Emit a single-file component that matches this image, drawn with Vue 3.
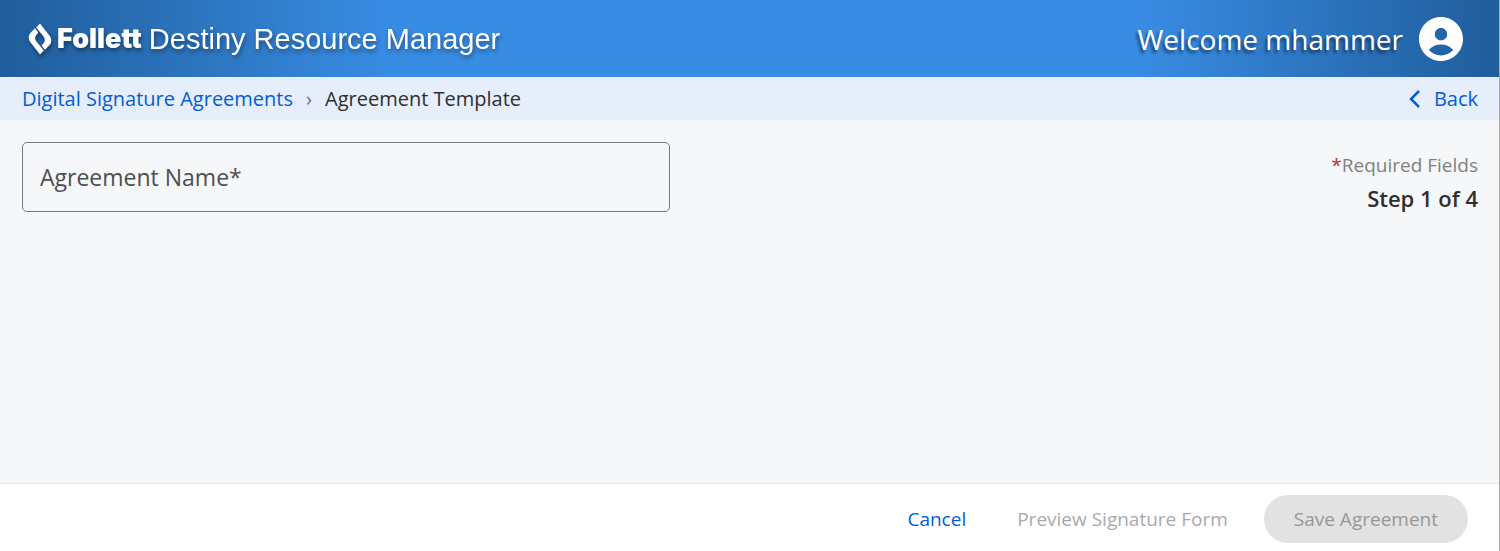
<script setup>
    import { ref } from 'vue';

    const userName = 'mhammer';
    const agreementName = ref('');
    const step = 1;
    const totalSteps = 4;
</script>


<template>
    <div class="page">
        <header class="topbar">
            <div class="brand">
                <svg class="logo" viewBox="0 0 24 32" aria-hidden="true">
                    <path d="M7 5.2 L2.4 10 Q-1 14 2.2 19 L12 31.4 L15.8 27.6 L8.6 18.8 Q6 15 8.2 12 L10.4 9.6 Z" />
                    <path d="M17 26.8 L21.6 22 Q25 18 21.8 13 L12 .6 L8.2 4.4 L15.4 13.2 Q18 17 15.8 20 L13.6 22.4 Z" />
                </svg>
                <span class="company">Follett</span>
                <span class="product">Destiny Resource Manager</span>
            </div>
            <div class="user">
                <span>Welcome {{ userName }}</span>
                <svg class="avatar" viewBox="2 2 20 20" aria-hidden="true">
                    <path d="M12 2C6.48 2 2 6.48 2 12s4.48 10 10 10 10-4.48 10-10S17.52 2 12 2zm0 5c1.55 0 2.8 1.25 2.8 2.8s-1.25 2.8-2.8 2.8-2.8-1.25-2.8-2.8S10.45 7 12 7zm0 12.5c-2.05 0-4.15-.83-5.55-2.45C7.95 15.3 9.9 14.5 12 14.5s4.05.8 5.55 2.55C16.15 18.67 14.05 19.5 12 19.5z" />
                </svg>
            </div>
        </header>

        <nav class="crumbs">
            <a href="#">Digital Signature Agreements</a>
            <span class="sep">›</span>
            <span>Agreement Template</span>
            <a href="#" class="back">
                <svg viewBox="0 0 12 20" aria-hidden="true"><path d="M11 2 L3 10 L11 18" /></svg>
                Back
            </a>
        </nav>

        <main class="content">
            <div class="field">
                <input id="agreement-name" v-model="agreementName" type="text" required />
                <label v-show="!agreementName" for="agreement-name">Agreement Name*</label>
            </div>
            <div class="info">
                <div class="required"><span class="star">*</span>Required Fields</div>
                <div class="step">Step {{ step }} of {{ totalSteps }}</div>
            </div>
        </main>

        <footer class="actions">
            <button type="button" class="cancel">Cancel</button>
            <button type="button" disabled>Preview Signature Form</button>
            <button type="button" class="save" disabled>Save Agreement</button>
        </footer>
    </div>
</template>


<style>
    body{
        margin: 0;
    }
</style>

<style scoped>
    .page{
        display: flex;
        flex-direction: column;
        min-height: 100vh;
        box-sizing: border-box;
        border-right: 1px solid #a9a9a9;
        background: #f6f7f9;
        color: #2e2f31;
        font-family: "Open Sans", "Noto Sans", sans-serif;
        font-size: 20px;
        line-height: 28px;
    }
    a{
        color: #005dd6;
        text-decoration: none;
    }
    .topbar{
        display: flex;
        align-items: center;
        justify-content: space-between;
        height: 77px;
        padding: 0 36px 0 28px;
        background: linear-gradient(90deg, #205d9b 0%, #388ce3 26%, #388ce3 76%, #205d9b 100%);
        color: #fff;
    }
    .brand{
        display: flex;
        align-items: center;
        font-family: "Liberation Sans", Arial, sans-serif;
        font-size: 29px;
        line-height: 32px;
        filter: drop-shadow(1px 3px 2px rgba(0, 0, 0, 0.4));
    }
    .logo{
        width: 24px;
        height: 32px;
        margin-right: 5px;
        fill: #fff;
    }
    .company{
        margin-right: 7px;
        font-family: Inter, "Open Sans", sans-serif;
        font-size: 27px;
        font-weight: 900;
    }
    .user{
        display: flex;
        align-items: center;
        gap: 16px;
        font-size: 28px;
        text-shadow: -2px 3px 3px rgba(0, 0, 0, 0.5);
    }
    .avatar{
        width: 44px;
        height: 44px;
        fill: #fff;
    }
    .crumbs{
        display: flex;
        align-items: center;
        height: 43px;
        padding: 0 21px 0 22px;
        background: #e7eefb;
    }
    .sep{
        margin: 0 13px;
        color: #6d6e73;
    }
    .back{
        display: flex;
        align-items: center;
        gap: 14px;
        margin-left: auto;
    }
    .back svg{
        width: 12px;
        height: 20px;
        fill: none;
        stroke: #005dd6;
        stroke-width: 2.5;
    }
    .content{
        display: flex;
        flex: 1;
        align-items: flex-start;
        justify-content: space-between;
        padding: 22px 21px 22px 22px;
    }
    /* 输入框和标签叠放在同一个网格单元里 */
    .field{
        display: grid;
        align-items: center;
        width: 45%;
        min-width: 320px;
        max-width: 648px;
        font-size: 23px;
    }
    .field input{
        grid-area: 1 / 1;
        width: 100%;
        height: 70px;
        padding: 0 18px;
        box-sizing: border-box;
        border: 1px solid #767982;
        border-radius: 5px;
        background: transparent;
        color: inherit;
        font: inherit;
    }
    .field label{
        grid-area: 1 / 1;
        padding-left: 18px;
        color: #4d4e52;
        pointer-events: none;
    }
    .info{
        padding-top: 9px;
        text-align: right;
    }
    .required{
        color: #7f7f83;
        font-size: 19px;
    }
    .star{
        color: #b5302f;
    }
    .step{
        margin-top: 5px;
        font-size: 22px;
        font-weight: 600;
    }
    .actions{
        display: flex;
        align-items: center;
        justify-content: flex-end;
        height: 68px;
        padding: 3px 31px 0 22px;
        box-sizing: border-box;
        border-top: 1px solid #e2e4e8;
        background: #fff;
    }
    .actions button{
        height: 48px;
        margin-right: 36px;
        padding: 0;
        border: 0;
        background: none;
        color: #a9a9ac;
        font: inherit;
        font-size: 19px;
    }
    .actions .cancel{
        margin-right: 51px;
        color: #005dd6;
        cursor: pointer;
    }
    .actions .save{
        margin-right: 0;
        padding: 0 30px;
        border-radius: 24px;
        background: #e2e2e2;
        color: #97979b;
    }
</style>
